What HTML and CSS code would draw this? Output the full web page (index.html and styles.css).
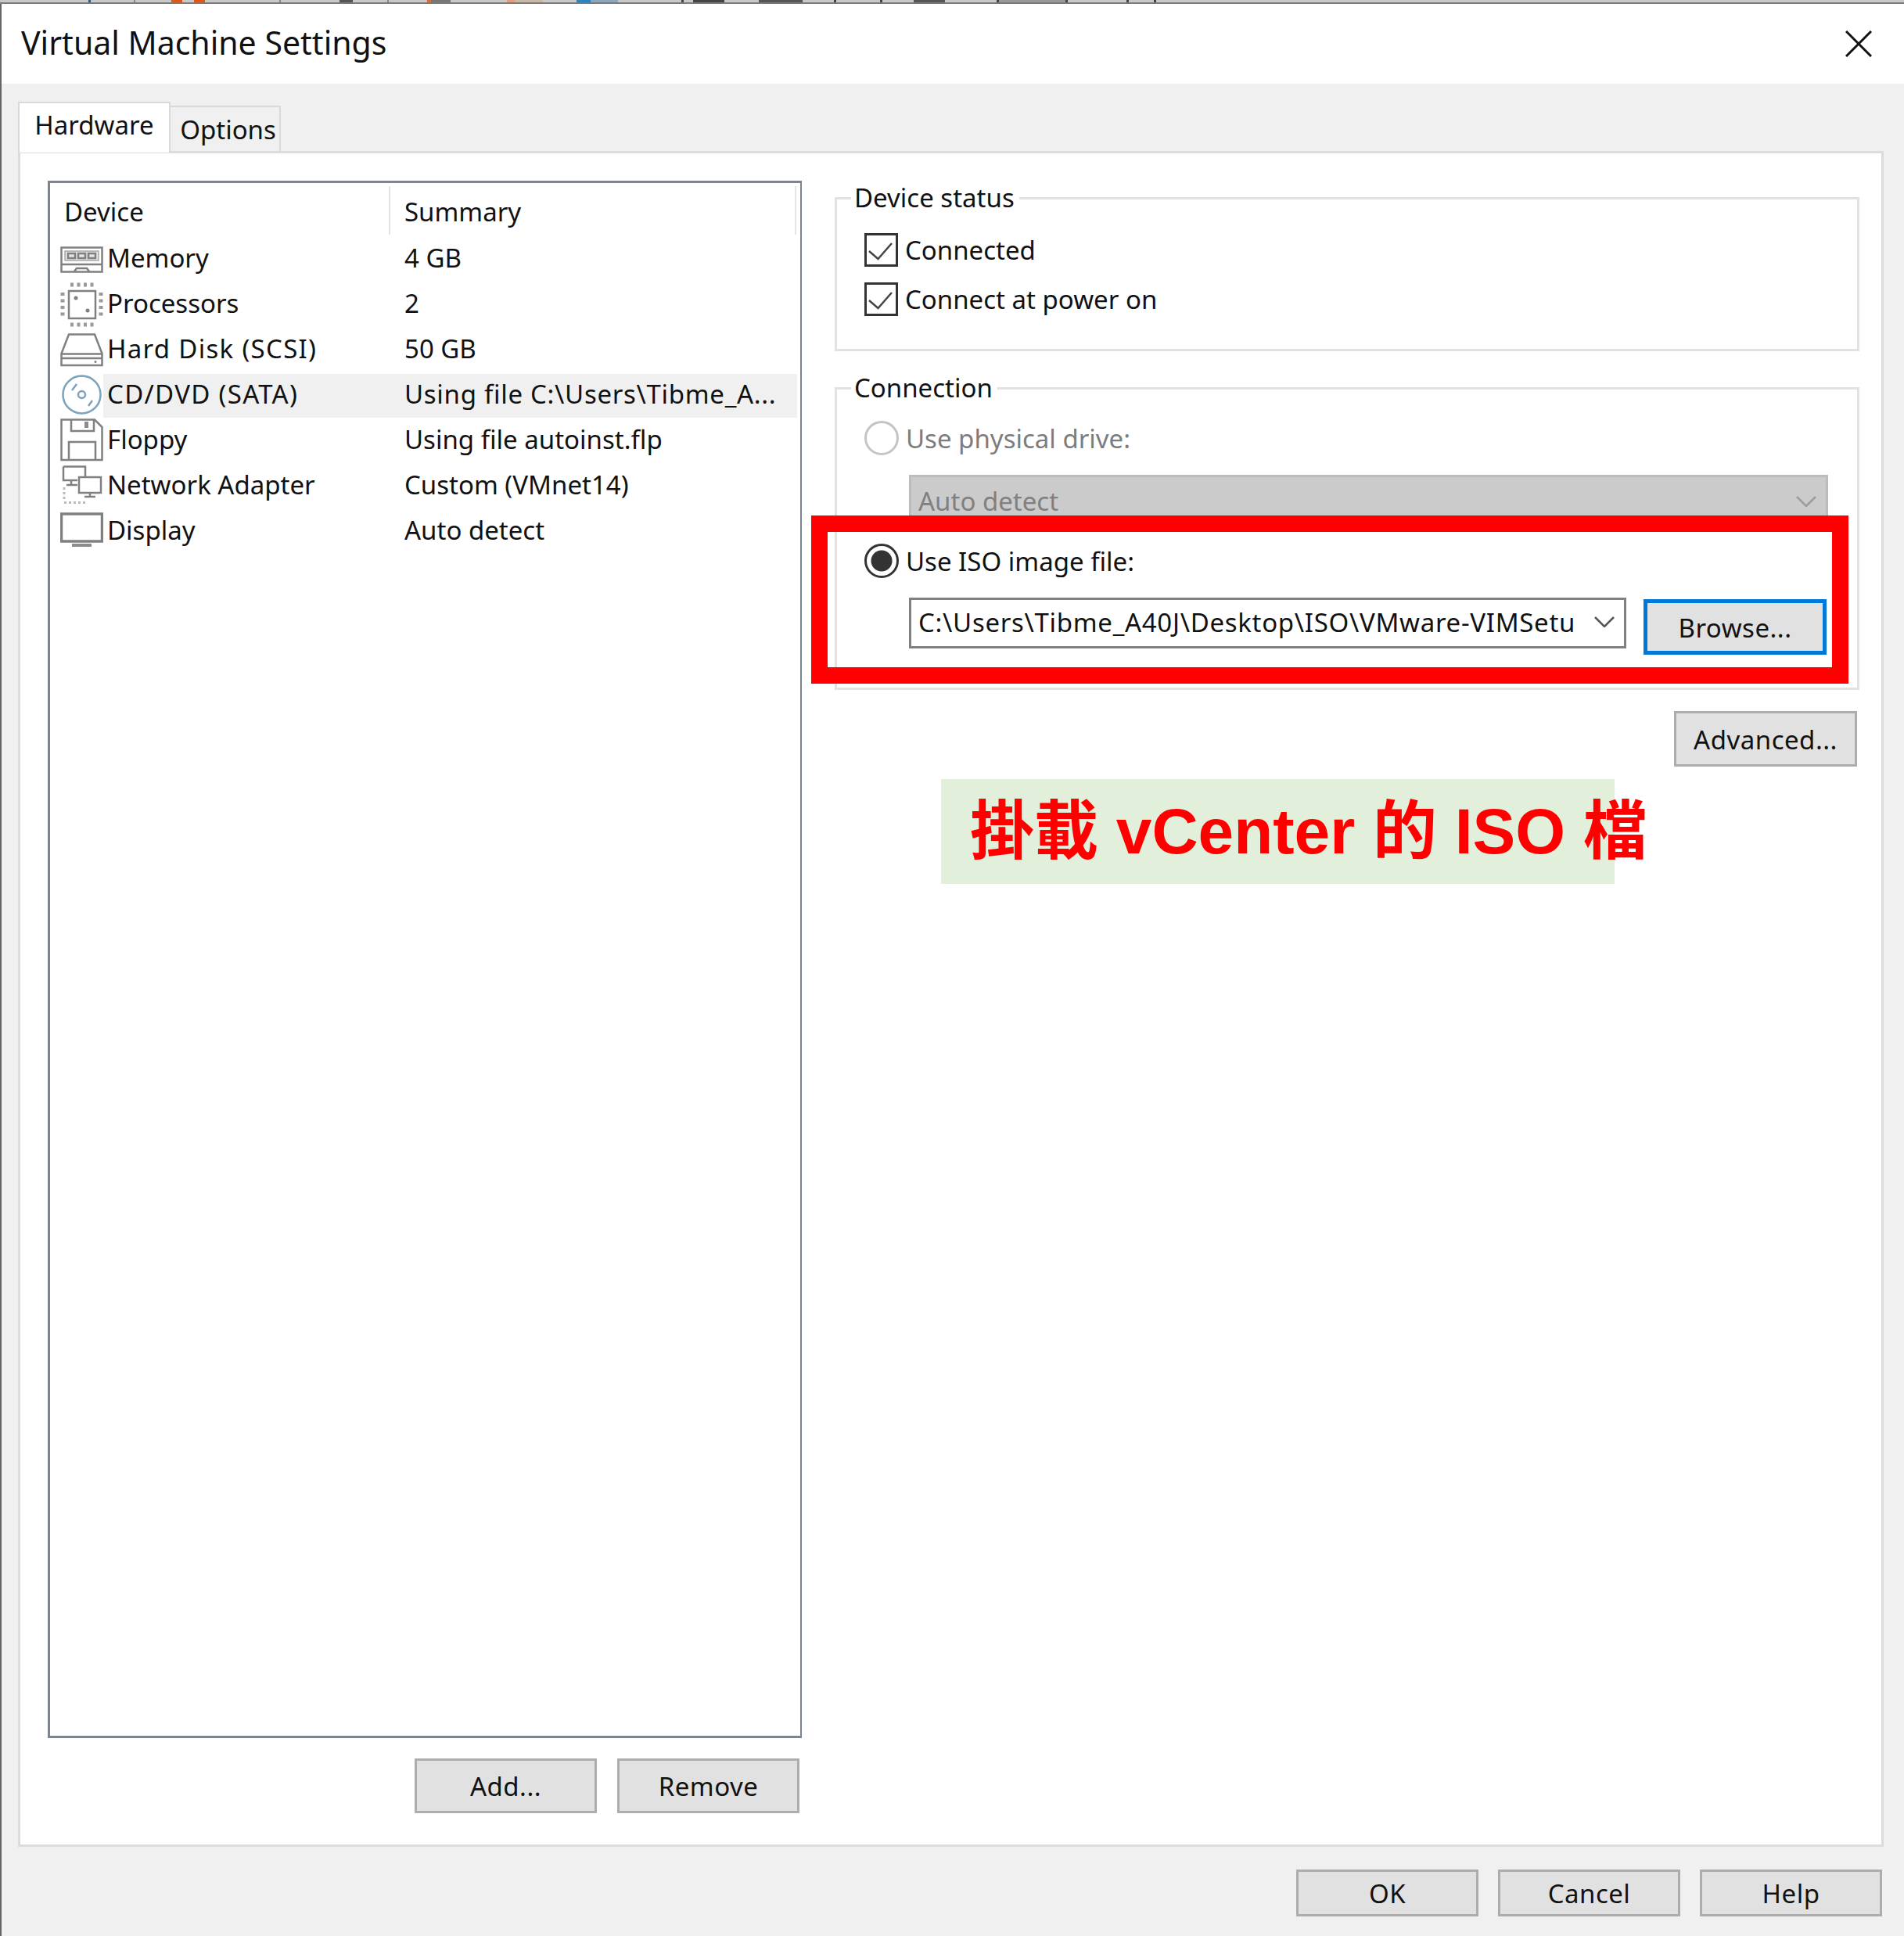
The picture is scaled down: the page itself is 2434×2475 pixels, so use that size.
FILE: index.html
```html
<!DOCTYPE html>
<html lang="en">
<head>
  <meta charset="UTF-8">
  <title>Virtual Machine Settings</title>
  <link rel="stylesheet" href="styles.css">
</head>
<body>

  <div class="desktop-strip"></div>

  <div class="window">
    <div class="titlebar">
      <span class="title">Virtual Machine Settings</span>
      <svg class="close" viewBox="0 0 34 34"><path d="M1 1 33 33M33 1 1 33"/></svg>
    </div>

    <div class="dialog">
      <div class="tabs">
        <div class="tab tab-active">Hardware</div>
        <div class="tab">Options</div>
      </div>

      <div class="panel">
        <div class="col-left">
          <div class="devices">
            <div class="devices-head">
              <div class="head-device">Device</div>
              <div class="head-summary">Summary</div>
            </div>

            <div class="row">
              <svg class="icon" viewBox="0 0 55 58"><rect x="1.5" y="13.5" width="52" height="31"/><rect class="soft" x="6" y="18" width="43" height="12"/><path d="M10 21h9v6h-9zM23 21h9v6h-9zM36 21h9v6h-9z"/><path d="M2 35H54M18 44l3-4h13l3 4"/></svg>
              <div class="cells"><span class="name">Memory</span><span class="summary">4 GB</span></div>
            </div>
            <div class="row">
              <svg class="icon" viewBox="0 0 55 58"><rect x="11" y="11" width="34" height="35"/><circle class="dot" cx="20" cy="20" r="2.5"/><circle class="dot" cx="35" cy="36" r="2.5"/><path class="pins" d="M13 3H45M13 54H45M3 13V45M52 13V45"/></svg>
              <div class="cells"><span class="name">Processors</span><span class="summary">2</span></div>
            </div>
            <div class="row">
              <svg class="icon" viewBox="0 0 55 58"><path d="M11 8.500H44L53.500 33V48H1.500V33Z"/><path d="M2 33.500H53M2 39H53"/><circle class="dot" cx="45" cy="43.500" r="1.500"/></svg>
              <div class="cells"><span class="name caps">Hard Disk (SCSI)</span><span class="summary">50 GB</span></div>
            </div>
            <div class="row row-selected">
              <svg class="icon icon-disc" viewBox="0 0 55 58"><circle cx="27.500" cy="27.500" r="24"/><circle cx="27.500" cy="27.500" r="4.500"/><path d="M15 22 21 14M36 42 41 35"/></svg>
              <div class="cells"><span class="name caps">CD/DVD (SATA)</span><span class="summary path">Using file C:\Users\Tibme_A...</span></div>
            </div>
            <div class="row">
              <svg class="icon" viewBox="0 0 55 58"><path d="M1.500 1.500H44L53.500 11V53H1.500Z"/><path d="M14 2V16H43V2M11 53V30H45V53"/><rect class="fill" x="31" y="4" width="5" height="8"/></svg>
              <div class="cells"><span class="name">Floppy</span><span class="summary">Using file autoinst.flp</span></div>
            </div>
            <div class="row">
              <svg class="icon" viewBox="0 0 55 58"><path d="M4 3.500H32V17M22 21H4V3.500M14 21V26M8 27H22"/><rect x="24" y="17" width="28" height="20"/><path d="M38 37V41M31 42H45"/><path class="pins-fine" d="M5 30V48M5 49.500H33"/></svg>
              <div class="cells"><span class="name">Network Adapter</span><span class="summary">Custom (VMnet14)</span></div>
            </div>
            <div class="row">
              <svg class="icon icon-heavy" viewBox="0 0 55 58"><rect x="1.500" y="6" width="52" height="35"/><rect class="fill" x="15" y="44" width="25" height="4"/></svg>
              <div class="cells"><span class="name">Display</span><span class="summary">Auto detect</span></div>
            </div>
          </div>

          <div class="list-buttons">
            <button class="btn">Add...</button>
            <button class="btn">Remove</button>
          </div>
        </div>

        <div class="col-right">
          <fieldset class="group group-status">
            <legend>Device status</legend>
            <div class="option">
              <span class="checkbox"><svg viewBox="0 0 37 37"><path d="M3 20 14.500 30 32 10"/></svg></span>
              <span>Connected</span>
            </div>
            <div class="option">
              <span class="checkbox"><svg viewBox="0 0 37 37"><path d="M3 20 14.500 30 32 10"/></svg></span>
              <span>Connect at power on</span>
            </div>
          </fieldset>

          <fieldset class="group group-connection">
            <legend>Connection</legend>
            <div class="option option-disabled">
              <span class="radio"></span>
              <span>Use physical drive:</span>
            </div>
            <div class="combo combo-disabled">
              <span>Auto detect</span>
              <svg class="chevron" viewBox="0 0 26 14"><path d="M1 1 13 13 25 1"/></svg>
            </div>
            <div class="option option-iso">
              <span class="radio radio-on"></span>
              <span>Use ISO image file:</span>
            </div>
            <div class="iso-row">
              <div class="combo combo-iso">
                <span class="path">C:\Users\Tibme_A40J\Desktop\ISO\VMware-VIMSetu</span>
                <svg class="chevron" viewBox="0 0 26 14"><path d="M1 1 13 13 25 1"/></svg>
              </div>
              <button class="btn btn-focus">Browse...</button>
            </div>
          </fieldset>

          <div class="advanced-row">
            <button class="btn">Advanced...</button>
          </div>
        </div>
      </div>

      <div class="footer">
        <button class="btn btn-footer">OK</button>
        <button class="btn btn-footer">Cancel</button>
        <button class="btn btn-footer">Help</button>
      </div>
    </div>

    <!-- annotations pasted on top of the screenshot -->
    <div class="mark-box"></div>
    <div class="mark-label">掛載 vCenter 的 ISO 檔</div>
  </div>

</body>
</html>
```

FILE: styles.css
```css
* {
  box-sizing: border-box;
}

body {
  margin: 0;
  width: 2434px;
  height: 2475px;
  overflow: hidden;
  font-family: "Noto Sans", "Liberation Sans", sans-serif;
  font-size: 33px;
  color: #111;
  background-color: #f0f0f0;
}

/* taskbar of the desktop behind the dialog, only a sliver shows */
.desktop-strip {
  height: 5px;
  border-bottom: 2px solid #7a7a7a;
  background-color: #c8c8c8;
  background-image: linear-gradient(to right,
    transparent 113px, #1f5f9e 113px, #1f5f9e 116px,
    transparent 116px, transparent 171px, #888 171px, #888 173px,
    transparent 173px, transparent 219px, #d9581c 219px, #d9581c 233px,
    transparent 233px, transparent 248px, #d9581c 248px, #d9581c 262px,
    transparent 262px, transparent 357px, #888 357px, #888 359px,
    transparent 359px, transparent 434px, #555 434px, #555 451px,
    transparent 451px, transparent 495px, #888 495px, #888 497px,
    transparent 497px, transparent 546px, #d07040 546px, #d07040 551px,
    #777 551px, #777 576px,
    transparent 576px, transparent 648px, #e0a080 648px, #e0a080 658px,
    #c8b8a8 658px, #c8b8a8 694px,
    transparent 694px, transparent 737px, #2a86c0 737px, #2a86c0 755px,
    #8fa6b8 755px, #8fa6b8 790px,
    transparent 790px, transparent 871px, #444 871px, #444 874px,
    transparent 874px, transparent 886px, #444 886px, #444 926px,
    transparent 926px, transparent 970px, #555 970px, #555 1026px,
    transparent 1026px, transparent 1066px, #444 1066px, #444 1069px,
    transparent 1069px, transparent 1125px, #444 1125px, #444 1128px,
    transparent 1128px, transparent 1168px, #555 1168px, #555 1208px,
    transparent 1208px, transparent 1274px, #444 1274px, #444 1277px,
    #999 1277px, #999 1362px,
    #444 1362px, #444 1365px,
    transparent 1365px, transparent 1440px, #444 1440px, #444 1443px,
    transparent 1443px, transparent 1475px, #444 1475px, #444 1478px,
    transparent 1478px);
}

.window {
  position: relative;
  height: 2470px;
  border-left: 2px solid #666;
  display: flex;
  flex-direction: column;
}

.titlebar {
  height: 102px;
  flex: none;
  background-color: #fff;
  display: flex;
  align-items: center;
  justify-content: space-between;
  padding: 0 41px 5px 25px;
}

.title {
  font-size: 41px;
}

.close {
  width: 34px;
  height: 34px;
  fill: none;
  stroke: #111;
  stroke-width: 3;
  margin-top: 4px;
}

.dialog {
  flex: 1;
  padding: 0 26px 0 21px;
}

.tabs {
  height: 88px;
  display: flex;
  align-items: flex-end;
  margin-bottom: -2px;
  position: relative;
  z-index: 1;
}

.tab {
  width: 141px;
  height: 58px;
  border: 2px solid #d9d9d9;
  border-bottom: 0;
  border-left: 0;
  padding-left: 8px;
  text-align: center;
  line-height: 58px;
  margin-bottom: 2px;
}

.tab-active {
  width: 195px;
  height: 65px;
  padding-left: 0;
  border-left: 2px solid #d9d9d9;
  background-color: #fff;
  line-height: 56px;
  margin-bottom: 0;
}

.panel {
  height: 2168px;
  background-color: #fff;
  border: 3px solid #dcdcdc;
  display: flex;
}

.col-left {
  width: 1041px;
  flex: none;
  padding: 35px 0 0 35px;
}

.devices {
  width: 964px;
  height: 1991px;
  border: 3px solid #7c8490;
  border-right-width: 2px;
  padding-top: 1px;
}

.devices-head {
  height: 65px;
  display: flex;
  margin-bottom: 3px;
}

.head-device {
  width: 435px;
  padding: 13px 0 0 18px;
  border-right: 2px solid #e4e4e4;
  margin-top: 3px;
  line-height: 40px;
}

.head-summary {
  flex: 1;
  padding: 13px 0 0 18px;
  margin: 3px 5px 0 0;
  border-right: 2px solid #e4e4e4;
  line-height: 40px;
}

.row {
  height: 58px;
  display: flex;
  padding: 0 4px 0 13px;
}

.icon {
  width: 55px;
  height: 58px;
  flex: none;
  fill: none;
  stroke: #808080;
  stroke-width: 2.500;
}

.icon .soft {
  fill: #e6e6e6;
  stroke: #a8a8a8;
  stroke-width: 1.500;
}

.icon .dot {
  fill: #808080;
  stroke: none;
}

.icon .fill {
  fill: #8c8c8c;
  stroke: none;
}

.icon .pins {
  stroke: #9a9a9a;
  stroke-width: 5;
  stroke-dasharray: 4 4.500;
}

.icon .pins-fine {
  stroke: #bbb;
  stroke-width: 3;
  stroke-dasharray: 3 3;
}

.icon-disc {
  stroke: #7ba3bd;
}

.icon-heavy {
  stroke-width: 3.500;
}

.cells {
  flex: 1;
  display: flex;
  align-items: center;
  padding: 0 0 5px 5px;
  margin: 1px 0;
}

.row-selected .cells {
  background-color: #f0f0f0;
}

.name {
  width: 380px;
  flex: none;
}

.caps {
  letter-spacing: 1.300px;
}

.path {
  letter-spacing: 0.700px;
}

.list-buttons {
  width: 964px;
  display: flex;
  justify-content: flex-end;
  gap: 26px;
  padding: 26px 3px 0 0;
}

.btn {
  width: 233px;
  height: 70px;
  font: inherit;
  letter-spacing: 0.500px;
  color: inherit;
  background-color: #e1e1e1;
  border: 3px solid #adadad;
  padding: 0;
}

.col-right {
  flex: 1;
  padding-top: 35px;
}

.group {
  width: 1310px;
  margin: 0;
  min-width: 0;
  border: 3px solid #e2e2e2;
  padding: 0 0 0 35px;
}

.group legend {
  margin-left: -17px;
  padding: 0 6px 0 4px;
  height: 44px;
  line-height: 44px;
}

.group-status {
  height: 218px;
  padding-top: 22px;
  margin-bottom: 25px;
}

.group-connection {
  height: 408px;
  padding-top: 20px;
}

.option {
  display: flex;
  align-items: center;
  gap: 9px;
  height: 44px;
}

.group-status .option + .option {
  margin-top: 19px;
}

.option-disabled {
  color: #7d7d7d;
}

.option-iso {
  margin-top: 23px;
}

.checkbox {
  width: 43px;
  height: 43px;
  border: 3px solid #333;
  flex: none;
  background-color: #fff;
}

.checkbox svg {
  display: block;
  width: 37px;
  height: 37px;
  fill: none;
  stroke: #444;
  stroke-width: 2.500;
}

.radio {
  width: 44px;
  height: 44px;
  flex: none;
  border: 3px solid #c4c4c4;
  border-radius: 50%;
  background-color: #fff;
}

.radio-on {
  border-color: #333;
  background: radial-gradient(circle closest-side, #333 0 13px, #fff 14px);
}

.combo {
  margin-left: 57px;
  height: 65px;
  display: flex;
  align-items: center;
  justify-content: space-between;
  padding: 0 12px 0 9px;
}

.combo-disabled {
  width: 1175px;
  margin-top: 25px;
  padding-top: 2px;
  background-color: #cbcbcb;
  border: 3px solid #bcbcbc;
  color: #808080;
}

.combo-disabled .chevron {
  stroke: #9c9c9c;
}

.iso-row {
  display: flex;
  align-items: flex-start;
  margin-top: 25px;
}

.combo-iso {
  width: 917px;
  flex: none;
  padding-bottom: 3px;
  border: 3px solid #808080;
}

.chevron {
  width: 26px;
  height: 14px;
  flex: none;
  fill: none;
  stroke: #555;
  stroke-width: 2.500;
}

.btn-focus {
  width: 234px;
  height: 71px;
  margin: 2px 0 0 22px;
  padding-top: 2px;
  border: 5px solid #0078d7;
}

.advanced-row {
  width: 1310px;
  display: flex;
  justify-content: flex-end;
  padding: 27px 3px 0 0;
}

.advanced-row .btn {
  width: 234px;
  height: 71px;
  padding-top: 2px;
}

.footer {
  display: flex;
  justify-content: flex-end;
  gap: 25px;
  padding: 29px 2px 0 0;
}

.btn-footer {
  height: 60px;
}

/* annotations */
.mark-box {
  position: absolute;
  left: 1035px;
  top: 654px;
  width: 1326px;
  height: 215px;
  border: 21px solid #f00;
}

.mark-label {
  position: absolute;
  left: 1201px;
  top: 991px;
  width: 861px;
  height: 134px;
  padding-left: 37px;
  background-color: #e2efda;
  color: #f00;
  font-family: "Liberation Sans", "Noto Sans CJK TC", sans-serif;
  font-weight: bold;
  font-size: 82px;
  line-height: 134px;
  white-space: nowrap;
}
```
